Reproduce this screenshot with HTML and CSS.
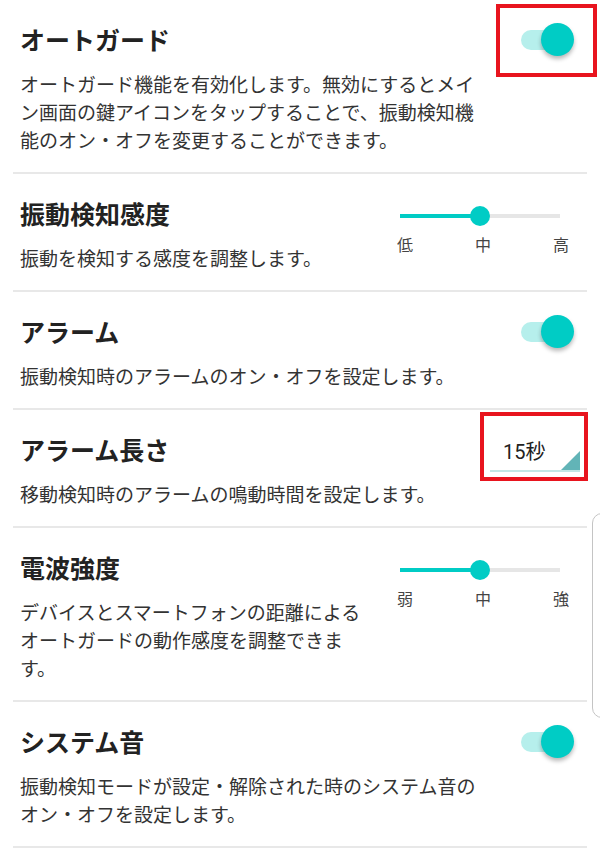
FILE: index.html
```html
<!DOCTYPE html>
<html lang="ja">
<head>
<meta charset="utf-8">
<title>設定</title>
<link rel="stylesheet" href="styles.css">
</head>
<body>
<main class="settings">
  <section class="row">
    <div class="head">
      <h2 class="title">オートガード</h2>
      <div class="switch marked"><span class="track"></span><span class="thumb"></span></div>
    </div>
    <p class="desc">オートガード機能を有効化します。無効にするとメイン画面の鍵アイコンをタップすることで、振動検知機能のオン・オフを変更することができます。</p>
  </section>

  <section class="row split">
    <div class="text">
      <h2 class="title">振動検知感度</h2>
      <p class="desc narrow">振動を検知する感度を調整します。</p>
    </div>
    <div class="slider">
      <div class="rail"><span class="fill"></span><span class="knob"></span></div>
      <div class="labels"><span>低</span><span>中</span><span>高</span></div>
    </div>
  </section>

  <section class="row">
    <div class="head">
      <h2 class="title">アラーム</h2>
      <div class="switch"><span class="track"></span><span class="thumb"></span></div>
    </div>
    <p class="desc">振動検知時のアラームのオン・オフを設定します。</p>
  </section>

  <section class="row">
    <div class="head">
      <h2 class="title">アラーム長さ</h2>
      <div class="spinner marked"><span class="value">15秒</span><span class="corner"></span></div>
    </div>
    <p class="desc">移動検知時のアラームの鳴動時間を設定します。</p>
  </section>

  <section class="row split">
    <div class="text">
      <h2 class="title">電波強度</h2>
      <p class="desc narrow">デバイスとスマートフォンの距離によるオートガードの動作感度を調整できます。</p>
    </div>
    <div class="slider">
      <div class="rail"><span class="fill"></span><span class="knob"></span></div>
      <div class="labels"><span>弱</span><span>中</span><span>強</span></div>
    </div>
  </section>

  <section class="row">
    <div class="head">
      <h2 class="title">システム音</h2>
      <div class="switch"><span class="track"></span><span class="thumb"></span></div>
    </div>
    <p class="desc">振動検知モードが設定・解除された時のシステム音のオン・オフを設定します。</p>
  </section>
</main>
<div class="edge-handle"></div>
</body>
</html>
```

FILE: styles.css
```css
html, body {
  margin: 0;
  padding: 0;
  background: #ffffff;
}

body {
  width: 600px;
  height: 855px;
  overflow: hidden;
  font-family: "Noto Sans CJK JP", "Noto Sans", sans-serif;
  color: #333333;
}

.settings {
  display: flex;
  flex-direction: column;
}

.row {
  margin: 0 13px;
  padding: 22px 7px 18px;
  border-bottom: 2px solid #e8e8e8;
}

.row.split {
  display: flex;
  align-items: flex-start;
}

.text {
  flex: 1;
  min-width: 0;
}

.head {
  display: flex;
  align-items: center;
  justify-content: space-between;
  height: 34px;
}

.title {
  margin: 0;
  font-size: 25px;
  line-height: 34px;
  font-weight: 700;
  color: #222222;
}

.desc {
  margin: 14px 0 0;
  max-width: 465px;
  font-size: 19px;
  line-height: 28px;
  color: #333333;
}

.desc.narrow {
  max-width: 355px;
}

/* toggle switch */
.switch {
  position: relative;
  width: 53px;
  height: 33px;
  margin-right: 6px;
}

.switch .track {
  position: absolute;
  left: 0;
  top: 7px;
  width: 44px;
  height: 20px;
  border-radius: 10px;
  background: #b6efec;
}

.switch .thumb {
  position: absolute;
  right: 0;
  top: 0;
  width: 33px;
  height: 33px;
  border-radius: 50%;
  background: #00ccc5;
  box-shadow: 0 3px 4px rgba(0, 0, 0, 0.28);
}

/* red highlight boxes */
.marked {
  position: relative;
}

.switch.marked::after {
  content: "";
  position: absolute;
  left: -25px;
  right: -23px;
  top: -19px;
  bottom: -21px;
  border: 4px solid #e8141e;
}

/* slider */
.slider {
  width: 172px;
  margin-right: 11px;
  padding-top: 10px;
}

.rail {
  position: relative;
  height: 20px;
  margin: 0 9px 0 3px;
}

.rail::before {
  content: "";
  position: absolute;
  left: 0;
  right: 0;
  top: 8px;
  height: 4px;
  background: #e6e6e6;
}

.rail .fill {
  position: absolute;
  left: 0;
  width: 50%;
  top: 8px;
  height: 4px;
  background: #00ccc5;
}

.rail .knob {
  position: absolute;
  left: 50%;
  top: 0;
  width: 20px;
  height: 20px;
  margin-left: -10px;
  border-radius: 50%;
  background: #00ccc5;
}

.labels {
  display: flex;
  justify-content: space-between;
  margin-top: 8px;
  font-size: 16px;
  line-height: 20px;
  color: #444444;
}

/* spinner */
.spinner {
  align-self: flex-start;
  width: 77px;
  margin-top: 6px;
  padding: 0 0 4px 13px;
  border-bottom: 2px solid #c2e7e6;
  font-family: Roboto, "Noto Sans CJK JP", sans-serif;
  font-size: 20px;
  line-height: 28px;
  color: #222222;
}

.spinner .corner {
  position: absolute;
  right: 0;
  bottom: 0;
  width: 0;
  height: 0;
  border-left: 19px solid transparent;
  border-bottom: 19px solid #62b4b7;
}

.spinner.marked::after {
  content: "";
  position: absolute;
  left: -10px;
  right: -8px;
  top: -26px;
  bottom: -11px;
  border: 4px solid #e8141e;
}

/* side edge handle overlay */
.edge-handle {
  position: fixed;
  left: 592px;
  top: 513px;
  width: 20px;
  height: 203px;
  border: 1.5px solid #c4c4c4;
  border-radius: 10px;
}
```
